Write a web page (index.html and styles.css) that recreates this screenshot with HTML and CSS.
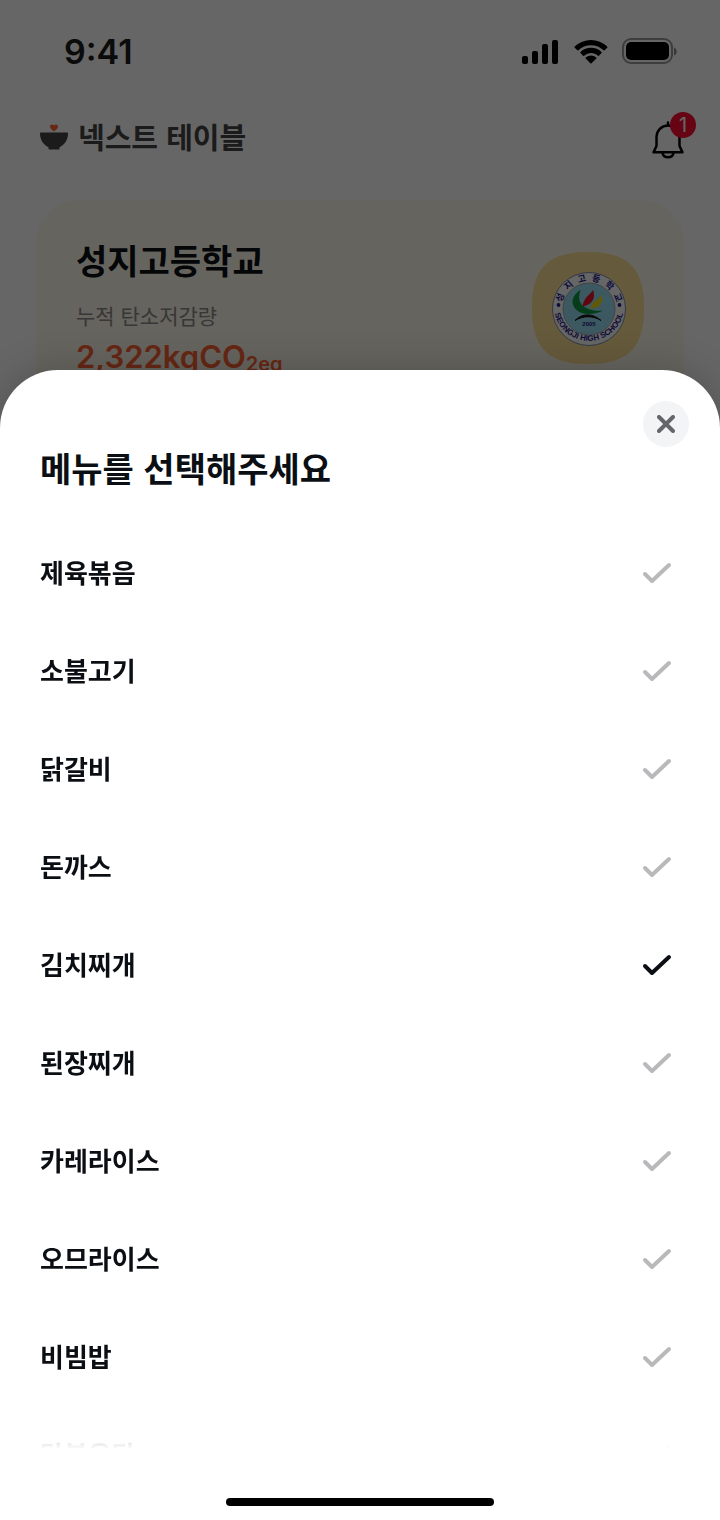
FILE: index.html
```html
<!DOCTYPE html>
<html lang="ko">
<head>
<meta charset="utf-8">
<meta name="viewport" content="width=device-width, initial-scale=1">
<title>넥스트 테이블</title>
<link rel="stylesheet" href="styles.css">
</head>
<body>
<div class="screen">
  <div class="app">
    <div class="status">
      <span class="time">9:41</span>
      <svg class="status-icons" width="156" height="28" viewBox="0 0 156 28" aria-hidden="true">
        <rect x="1" y="18" width="6" height="8" rx="2"/>
        <rect x="11" y="13" width="6" height="13" rx="2"/>
        <rect x="21" y="6" width="6" height="20" rx="2"/>
        <rect x="31" y="2" width="6" height="24" rx="2"/>
        <path d="M70 7.200c4.900 0 9.300 1.900 12.600 5.100.3.300.7.300 1 0l2.600-2.600c.3-.3.300-.8 0-1.100a23.300 23.300 0 0 0-32.500 0c-.3.300-.3.800 0 1.100l2.700 2.600c.3.300.7.300 1 0A18 18 0 0 1 70 7.200z"/>
        <path d="M70 15c2.600 0 5 1 6.900 2.700.3.300.7.300 1 0l2.600-2.600c.3-.3.300-.8 0-1.100a15.400 15.400 0 0 0-21 0c-.3.300-.3.800 0 1.100l2.600 2.600c.3.300.7.300 1 0A10.200 10.200 0 0 1 70 15z"/>
        <path d="M75.300 20.500c.3-.3.300-.8 0-1.100a8.300 8.300 0 0 0-10.600 0c-.3.300-.3.800 0 1.100l4.700 4.700c.3.300.8.300 1.100 0z"/>
        <rect x="102" y="1" width="49" height="24" rx="8" fill="none" stroke="#000" stroke-opacity=".4" stroke-width="2"/>
        <rect x="105" y="4" width="43" height="18" rx="5"/>
        <path d="M153 9.500v8c1.700-.7 2.700-2.200 2.700-4s-1-3.300-2.700-4z" opacity=".45"/>
      </svg>
    </div>
    <header class="topbar">
      <h1 class="brand">
        <svg width="28" height="26" viewBox="0 0 28 26" aria-hidden="true">
          <path d="M14 7.500C11.500 5.500 10 4.200 10 2.500 10 .2 12.700-.2 14 1.500 15.300-.2 18 .2 18 2.500 18 4.200 16.500 5.500 14 7.500z" fill="#ff6333"/>
          <path d="M1.200 8.500h25.600c.8 0 1.200.4 1.200 1.200 0 6-3.600 11.300-8.500 13.500v1.200c0 .7-.4 1.100-1.100 1.100H9.600c-.7 0-1.100-.4-1.100-1.100v-1.200C3.600 21 0 15.700 0 9.700c0-.8.4-1.200 1.200-1.200z" fill="#454545"/>
        </svg>
        <span>넥스트 테이블</span>
      </h1>
      <button class="bell" type="button" aria-label="알림">
        <svg width="32" height="40" viewBox="0 0 32 40" fill="none" stroke="#000" stroke-width="2.500" stroke-linecap="round" stroke-linejoin="round" aria-hidden="true">
          <path d="M16 4.500v-3M4.500 25V16a11.500 11.500 0 0 1 23 0v9l3 6.200H1.500z"/>
          <path d="M10.500 32a5.600 5.200 0 0 0 11 0"/>
        </svg>
        <span class="count">1</span>
      </button>
    </header>
    <section class="card">
      <div class="card-text">
        <h2 class="school">성지고등학교</h2>
        <p class="label">누적 탄소저감량</p>
        <p class="amount">2,322kgCO<sub class="unit">2eq</sub></p>
      </div>
      <svg class="emblem" width="112" height="112" viewBox="0 0 112 112" role="img" aria-label="성지고등학교 교표">
        <path d="M56 0C96 0 112 16 112 56S96 112 56 112 0 96 0 56 16 0 56 0z" fill="#ffe196"/>
        <circle cx="57" cy="57" r="36.500" fill="#fff" stroke="#7e8fb0"/>
        <circle cx="57" cy="57" r="26" fill="#96dcf0" stroke="#aaa"/>
        <defs>
          <path id="arc-top" d="M29 57a28 28 0 0 1 56 0"/>
          <path id="arc-bottom" d="M22.500 48a35 35 0 1 0 69 0"/>
        </defs>
        <g fill="#24208f">
          <text class="seal-ko"><textPath href="#arc-top" startOffset="50%" text-anchor="middle">성&#160;&#160;지&#160;&#160;고&#160;&#160;등&#160;&#160;학&#160;&#160;교</textPath></text>
          <text class="seal-en"><textPath href="#arc-bottom" startOffset="50%" text-anchor="middle">SEONGJI HIGH SCHOOL</textPath></text>
          <circle cx="26.500" cy="53" r="1.900"/>
          <circle cx="87.500" cy="53" r="1.900"/>
          <text class="seal-year" x="57" y="74" text-anchor="middle">2005</text>
        </g>
        <path d="M48.700 38c-5 2.500-9 8-8 13.500C42 58 49 62 56 62c6-.3 11-1.200 15-3.500-5 .5-9 .3-13-1-9-3-13.500-9-9.300-19.500z" fill="#0d9a45"/>
        <path d="M61 38c-2 4-10 8-10.300 16.500C59 53 64.500 47 61 38z" fill="#e8152c"/>
        <path d="M69.700 43c-2 4-9.500 5.500-11.700 13.500 8 .5 14-4.500 11.700-13.500z" fill="#f2df18"/>
        <path d="M43 68.500c7-7.500 18-7.500 26 0-8-5-18-5-26 0z" fill="#111" stroke="#111"/>
      </svg>
    </section>
  </div>
  <div class="dim"></div>
  <section class="sheet" role="dialog" aria-modal="true" aria-labelledby="sheet-title">
    <header class="sheet-head">
      <h2 class="sheet-title" id="sheet-title">메뉴를 선택해주세요</h2>
      <button class="close" type="button" aria-label="닫기">
        <svg width="18" height="18" viewBox="0 0 18 18" fill="none" stroke="#63676b" stroke-width="4" stroke-linecap="round" aria-hidden="true"><path d="M2 2l14 14M16 2L2 16"/></svg>
      </button>
    </header>
    <div class="options" role="radiogroup" aria-labelledby="sheet-title">
      <label class="option"><span>제육볶음</span><span class="tick"><input type="radio" name="menu"><svg viewBox="0 0 30 22" aria-hidden="true"><path d="M3 12l7 7L27 3"/></svg></span></label>
      <label class="option"><span>소불고기</span><span class="tick"><input type="radio" name="menu"><svg viewBox="0 0 30 22" aria-hidden="true"><path d="M3 12l7 7L27 3"/></svg></span></label>
      <label class="option"><span>닭갈비</span><span class="tick"><input type="radio" name="menu"><svg viewBox="0 0 30 22" aria-hidden="true"><path d="M3 12l7 7L27 3"/></svg></span></label>
      <label class="option"><span>돈까스</span><span class="tick"><input type="radio" name="menu"><svg viewBox="0 0 30 22" aria-hidden="true"><path d="M3 12l7 7L27 3"/></svg></span></label>
      <label class="option"><span>김치찌개</span><span class="tick"><input type="radio" name="menu" checked><svg viewBox="0 0 30 22" aria-hidden="true"><path d="M3 12l7 7L27 3"/></svg></span></label>
      <label class="option"><span>된장찌개</span><span class="tick"><input type="radio" name="menu"><svg viewBox="0 0 30 22" aria-hidden="true"><path d="M3 12l7 7L27 3"/></svg></span></label>
      <label class="option"><span>카레라이스</span><span class="tick"><input type="radio" name="menu"><svg viewBox="0 0 30 22" aria-hidden="true"><path d="M3 12l7 7L27 3"/></svg></span></label>
      <label class="option"><span>오므라이스</span><span class="tick"><input type="radio" name="menu"><svg viewBox="0 0 30 22" aria-hidden="true"><path d="M3 12l7 7L27 3"/></svg></span></label>
      <label class="option"><span>비빔밥</span><span class="tick"><input type="radio" name="menu"><svg viewBox="0 0 30 22" aria-hidden="true"><path d="M3 12l7 7L27 3"/></svg></span></label>
      <label class="option"><span>닭볶음탕</span><span class="tick"><input type="radio" name="menu"><svg viewBox="0 0 30 22" aria-hidden="true"><path d="M3 12l7 7L27 3"/></svg></span></label>
    </div>
    <footer class="sheet-foot"><div class="home"></div></footer>
  </section>
</div>
</body>
</html>
```
FILE: styles.css
```css
* { box-sizing: border-box; }

body {
  margin: 0;
  color: #0b0f14;
  background: #fff;
  font-family: "Noto Sans CJK KR", sans-serif;
  font-weight: 700;
}

h1, h2, p { margin: 0; }

button {
  padding: 0;
  border: 0;
  background: none;
  font: inherit;
  color: inherit;
}

svg { display: block; flex: none; }

.screen {
  display: grid;
  grid-template: 100vh / 1fr;
  overflow: hidden;
}

.app, .dim, .sheet { grid-area: 1 / 1; min-width: 0; }

.app { overflow: hidden; }

.dim { background: rgba(0, 0, 0, .6); z-index: 1; }

/* status bar */
.status {
  display: flex;
  align-items: center;
  justify-content: space-between;
  height: 104px;
  padding: 0 43px 0 64px;
}

.time {
  font: 600 34px/40px Inter, sans-serif;
  color: #1c1c1c;
}

/* app header */
.topbar {
  display: flex;
  align-items: center;
  justify-content: space-between;
  height: 66px;
  padding: 0 36px 0 40px;
}

.brand {
  display: flex;
  align-items: center;
  gap: 10px;
  font-size: 29px;
  font-weight: 700;
  line-height: 40px;
  color: #454545;
}

.brand span { padding-bottom: 2px; }

.bell { position: relative; padding-top: 8px; }

.count {
  position: absolute;
  top: -1px;
  right: -12px;
  width: 26px;
  height: 26px;
  border-radius: 50%;
  background: #ff0a32;
  color: #fff;
  font: 400 20px/26px Inter, sans-serif;
}

/* school card */
.card {
  display: flex;
  justify-content: space-between;
  margin: 30px 36px 0;
  padding: 36px 40px;
  border-radius: 44px;
  background: #fff9eb;
}

.school { font-size: 34px; line-height: 48px; }

.label {
  margin-top: 15px;
  font-size: 21px;
  font-weight: 400;
  line-height: 32px;
  color: #8a8a8a;
}

.amount {
  margin-top: 6px;
  font: 600 31px/40px Inter, sans-serif;
  color: #ff6333;
}

.unit { font-size: 20px; line-height: 1; vertical-align: -3px; }

.emblem { margin-top: 16px; }

.seal-ko { font-size: 9px; font-weight: 700; }
.seal-en { font: 700 8px "Liberation Sans", sans-serif; }
.seal-year { font: 700 6px "Liberation Sans", sans-serif; }

/* bottom sheet */
.sheet {
  z-index: 2;
  display: flex;
  flex-direction: column;
  min-height: 0;
  margin-top: 370px;
  border-radius: 58px 58px 0 0;
  background: #fff;
  box-shadow: 0 0 40px rgba(0, 0, 0, .2);
}

.sheet-head {
  display: flex;
  align-items: flex-start;
  justify-content: space-between;
  padding: 31px 31px 31px 40px;
}

.sheet-title {
  padding-top: 42px;
  font-size: 34px;
  line-height: 50px;
}

.close {
  display: grid;
  place-items: center;
  width: 46px;
  height: 46px;
  border-radius: 50%;
  background: #f2f4f6;
}

.options {
  flex: 1;
  min-height: 0;
  overflow: hidden;
  -webkit-mask-image: linear-gradient(to top, rgba(0, 0, 0, .02), #000 60px);
  mask-image: linear-gradient(to top, rgba(0, 0, 0, .02), #000 60px);
}

.option {
  display: flex;
  align-items: center;
  justify-content: space-between;
  height: 98px;
  padding: 0 48px 0 40px;
  font-size: 26px;
  line-height: 38px;
}

.option > span:first-child { padding-bottom: 2px; }

.tick { display: grid; }

.tick > * { grid-area: 1 / 1; width: 30px; height: 22px; margin: 0; }

.tick input { appearance: none; }

.tick path {
  fill: none;
  stroke: #b9b9bb;
  stroke-width: 4;
  stroke-linecap: round;
  stroke-linejoin: round;
}

.tick input:checked + svg path { stroke: #0b0f14; }

.sheet-foot {
  display: flex;
  justify-content: center;
  align-items: flex-end;
  height: 72px;
  padding-bottom: 14px;
}

.home {
  width: 268px;
  height: 8px;
  border-radius: 4px;
  background: #000;
}
```
